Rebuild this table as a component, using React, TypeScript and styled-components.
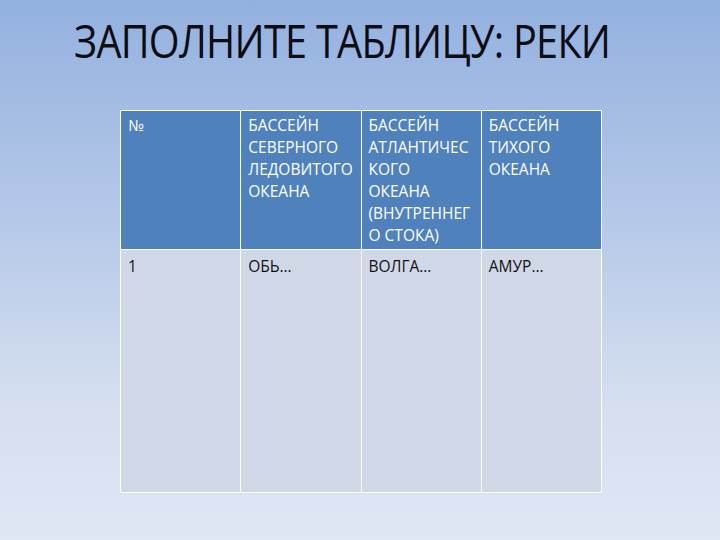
import React from "react";
import styled, { createGlobalStyle } from "styled-components";

const GlobalStyle = createGlobalStyle`
  html, body {
    margin: 0;
    padding: 0;
  }
  body {
    font-family: "Open Sans", "Liberation Sans", sans-serif;
  }
`;

const headers: string[][] = [
  ["№"],
  ["БАССЕЙН", "СЕВЕРНОГО", "ЛЕДОВИТОГО", "ОКЕАНА"],
  ["БАССЕЙН", "АТЛАНТИЧЕС", "КОГО", "ОКЕАНА", "(ВНУТРЕННЕГ", "О СТОКА)"],
  ["БАССЕЙН", "ТИХОГО", "ОКЕАНА"],
];

const rivers = ["1", "ОБЬ…", "ВОЛГА…", "АМУР…"];

const App = () => {
  return (
    <Slide>
      <GlobalStyle />
      <Title>ЗАПОЛНИТЕ ТАБЛИЦУ: РЕКИ</Title>
      <Table>
        <thead>
          <tr>
            {headers.map((lines, i) => (
              <HeadCell key={i}>
                {lines.map((l, j) => (
                  <React.Fragment key={j}>
                    {l}
                    {j < lines.length - 1 && <br />}
                  </React.Fragment>
                ))}
              </HeadCell>
            ))}
          </tr>
        </thead>
        <tbody>
          <tr>
            {rivers.map((r, i) => (
              <BodyCell key={i}>{r}</BodyCell>
            ))}
          </tr>
        </tbody>
      </Table>
    </Slide>
  );
};

export default App;

const Slide = styled.div`
  width: 720px;
  height: 540px;
  box-sizing: border-box;
  padding-top: 11px;
  background: linear-gradient(180deg, #93b1df 0%, #b5c8e8 40%, #d5dff0 75%, #dfe7f5 100%);
  overflow: hidden;
`;

const Title = styled.h1`
  margin: 0 0 0 74px;
  font-family: "Open Sans", "Liberation Sans", sans-serif;
  font-weight: 400;
  font-size: 45px;
  line-height: 60px;
  color: #0c0c14;
  letter-spacing: -0.8px;
  white-space: nowrap;
  transform: scaleX(0.88);
  transform-origin: left center;
`;

const Table = styled.table`
  margin: 39px 0 0 120px;
  width: 482px;
  border-collapse: collapse;
  table-layout: fixed;
  font-family: "Open Sans", "Liberation Sans", sans-serif;
  font-size: 15.5px;
  line-height: 22px;
  letter-spacing: 0;

  td, th {
    border: 1px solid #ffffff;
    vertical-align: top;
    text-align: left;
    padding: 3px 7px;
  }
`;

const HeadCell = styled.th`
  height: 127px;
  background: #4f81bd;
  color: #ffffff;
  font-weight: 400;
`;

const BodyCell = styled.td`
  height: 234px;
  background: #d0d8e8;
  color: #111111;
  padding-top: 5px !important;
`;
